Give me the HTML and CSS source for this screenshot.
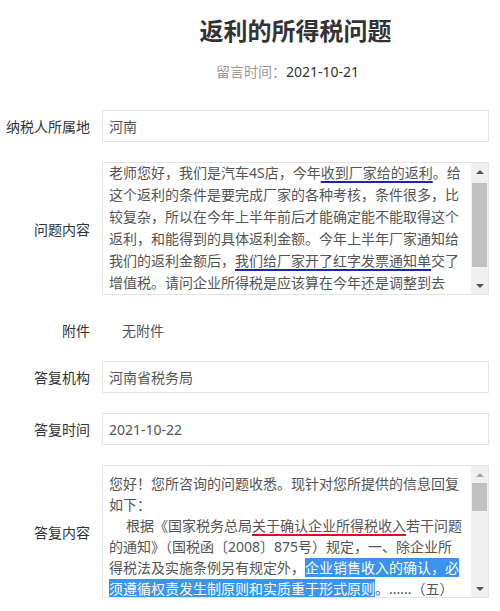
FILE: index.html
```html
<!DOCTYPE html>
<html lang="zh-CN">
<head>
  <meta charset="UTF-8" />
  <meta name="viewport" content="width=device-width, initial-scale=1.0"/>
  <title>返利的所得税问题</title>
  <link rel="stylesheet" href="styles.css">
</head>
<body>
  <div class="detail">
    <div class="row header">
      <div></div>
      <div class="head-text">
        <h1 class="title">返利的所得税问题</h1>
        <p class="meta"><span class="meta-label">留言时间：</span>2021-10-21</p>
      </div>
    </div>

    <div class="row">
      <label class="label">纳税人所属地</label>
      <div class="field">河南</div>
    </div>

    <div class="row">
      <label class="label">问题内容</label>
      <div class="textbox">
        <div class="text text-question">
          老师您好，我们是汽车4S店，今年<span class="mark-blue">收到厂家给的返利</span>。给<br>
          这个返利的条件是要完成厂家的各种考核，条件很多，比<br>
          较复杂，所以在今年上半年前后才能确定能不能取得这个<br>
          返利，和能得到的具体返利金额。今年上半年厂家通知给<br>
          我们的返利金额后，<span class="mark-blue">我们给厂家开了红字发票通知单</span>交了<br>
          增值税。请问企业所得税是应该算在今年还是调整到去<br>
          年？谢谢
        </div>
        <div class="scrollbar">
          <div class="arrow"><span class="tri-up"></span></div>
          <div class="track"><div class="thumb thumb-question"></div></div>
          <div class="arrow"><span class="tri-down"></span></div>
        </div>
      </div>
    </div>

    <div class="row row-plain">
      <label class="label">附件</label>
      <div class="plain">无附件</div>
    </div>

    <div class="row">
      <label class="label">答复机构</label>
      <div class="field">河南省税务局</div>
    </div>

    <div class="row">
      <label class="label">答复时间</label>
      <div class="field">2021-10-22</div>
    </div>

    <div class="row">
      <label class="label">答复内容</label>
      <div class="textbox">
        <div class="text text-answer">
          您好！您所咨询的问题收悉。现针对您所提供的信息回复<br>
          如下：<br>
          <span class="indent"></span>根据《国家税务总局<span class="mark-red">关于确认企业所得税收入</span>若干问题<br>
          的通知》（国税函〔2008〕875号）规定，一、除企业所<br>
          得税法及实施条例另有规定外，<span class="hl">企业销售收入的确认，必</span><br>
          <span class="hl">须遵循权责发生制原则和实质重于形式原则</span>。......（五）
        </div>
        <div class="scrollbar">
          <div class="arrow"><span class="tri-up off"></span></div>
          <div class="track"><div class="thumb thumb-answer"></div></div>
          <div class="arrow"><span class="tri-down"></span></div>
        </div>
      </div>
    </div>
  </div>
</body>
</html>
```

FILE: styles.css
```css
* {
  box-sizing: border-box;
}

body {
  margin: 0;
  padding: 0;
  background: #fff;
  font-family: "Noto Sans", "Noto Sans CJK SC", sans-serif;
  font-size: 14px;
  color: #333;
}

.detail {
  width: 489px;
  padding-top: 15px;
}

.row {
  display: grid;
  grid-template-columns: 90px 1fr;
  column-gap: 12px;
  align-items: center;
  margin-bottom: 20px;
}

.header {
  margin-bottom: 28px;
}

.head-text {
  text-align: center;
}

.title {
  margin: 0;
  font-size: 24px;
  line-height: 32px;
  font-weight: 700;
  color: #333;
}

.meta {
  margin: 15px 0 0;
  padding-right: 16px;
  line-height: 20px;
  color: #333;
}

.meta-label {
  color: #999;
}

.label {
  text-align: right;
  color: #333;
  white-space: nowrap;
}

.field {
  height: 32px;
  border: 1px solid #e4e4e4;
  padding: 0 6px;
  display: flex;
  align-items: center;
  color: #555;
}

.row-plain {
  height: 30px;
  margin-bottom: 16px;
}

.plain {
  padding-left: 20px;
  color: #555;
}

/* read-only text areas with a drawn scrollbar */
.textbox {
  height: 133px;
  border: 1px solid #e4e4e4;
  display: flex;
  overflow: hidden;
}

.text {
  flex: 1;
  padding: 0 6px;
  overflow: hidden;
  white-space: nowrap;
  color: #555;
}

/* scrolled down a little, so the first line sits on the top edge */
.text-question {
  line-height: 22px;
  margin-top: -1px;
}

.text-answer {
  line-height: 21px;
  padding-top: 7px;
}

.indent {
  display: inline-block;
  width: 17px;
}

.mark-blue {
  text-decoration: underline;
  text-decoration-color: #1a2a9e;
  text-decoration-thickness: 2px;
  text-underline-offset: 3px;
}

.mark-red {
  text-decoration: underline;
  text-decoration-color: #d3131f;
  text-decoration-thickness: 2px;
  text-underline-offset: 3px;
}

.hl {
  background: #3a93f0;
  color: #fff;
}

.scrollbar {
  width: 17px;
  display: flex;
  flex-direction: column;
  background: #f0f0f0;
}

.arrow {
  height: 17px;
  display: flex;
  align-items: center;
  justify-content: center;
}

.tri-up,
.tri-down {
  width: 0;
  height: 0;
  border-left: 4px solid transparent;
  border-right: 4px solid transparent;
}

.tri-up {
  border-bottom: 4px solid #505050;
}

.tri-up.off {
  border-bottom-color: #a3a3a3;
}

.tri-down {
  border-top: 4px solid #505050;
}

.track {
  flex: 1;
}

.thumb {
  margin: 0 1px;
  background: #c1c1c1;
}

.thumb-question {
  margin-top: 3px;
  height: 84px;
}

.thumb-answer {
  margin-top: 0;
  height: 28px;
}
```
